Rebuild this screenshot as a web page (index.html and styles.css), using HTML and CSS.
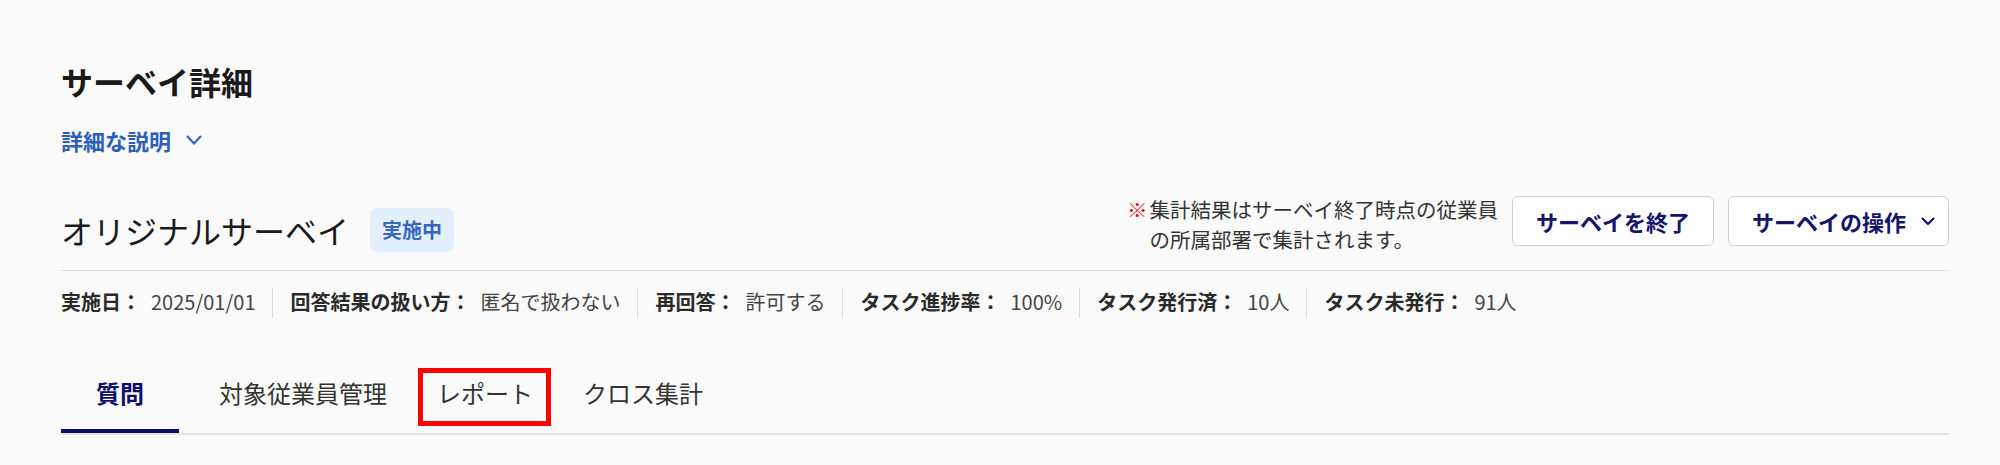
FILE: index.html
```html
<!DOCTYPE html>
<html lang="ja">
<head>
<meta charset="UTF-8">
<title>サーベイ詳細</title>
<link rel="stylesheet" href="styles.css">
</head>
<body>

<div class="page">
    <h1 class="page-title">サーベイ詳細</h1>

    <a class="detail-toggle" href="#">
        詳細な説明
        <svg width="18" height="12" viewBox="0 0 18 12"><path d="M2 2 L9 9.5 L16 2" fill="none" stroke="#2b5fb8" stroke-width="2"/></svg>
    </a>

    <!-- Survey header -->
    <div class="survey-header">
        <div class="survey-title">
            <span class="survey-name">オリジナルサーベイ</span>
            <span class="badge">実施中</span>
        </div>
        <div class="survey-actions">
            <p class="note"><span class="note-mark">※</span><span>集計結果はサーベイ終了時点の従業員<br>の所属部署で集計されます。</span></p>
            <button class="btn">サーベイを終了</button>
            <button class="btn btn-menu">サーベイの操作
                <svg width="16" height="10" viewBox="0 0 16 10"><path d="M2 2 L8 8 L14 2" fill="none" stroke="#14146b" stroke-width="2.2"/></svg>
            </button>
        </div>
    </div>

    <!-- Summary -->
    <ul class="stats">
        <li><b>実施日：</b><span>2025/01/01</span></li>
        <li><b>回答結果の扱い方：</b><span>匿名で扱わない</span></li>
        <li><b>再回答：</b><span>許可する</span></li>
        <li><b>タスク進捗率：</b><span>100%</span></li>
        <li><b>タスク発行済：</b><span>10人</span></li>
        <li><b>タスク未発行：</b><span>91人</span></li>
    </ul>

    <!-- Tabs -->
    <nav class="tabs">
        <a class="tab active" href="#">質問</a>
        <a class="tab" href="#">対象従業員管理</a>
        <a class="tab" href="#">レポート<span class="highlight"></span></a>
        <a class="tab" href="#">クロス集計</a>
    </nav>
</div>

</body>
</html>
```

FILE: styles.css
```css
/* Base */
html, body {
    margin: 0;
    padding: 0;
    background: #fafafa;
    color: #1a1a1a;
    font-family: "Noto Sans CJK JP", "Noto Sans", sans-serif;
}

.page {
    padding: 61px 51px 0 61px;
}

/* Title + description toggle */
.page-title {
    margin: 0;
    font-size: 32px;
    line-height: 40px;
    font-weight: 700;
}

.detail-toggle {
    display: inline-flex;
    align-items: center;
    gap: 14px;
    margin-top: 25px;
    font-size: 22px;
    line-height: 28px;
    font-weight: 700;
    color: #2b5fb8;
    text-decoration: none;
}

/* Survey header */
.survey-header {
    display: flex;
    justify-content: space-between;
    align-items: center;
    margin-top: 39px;
    padding-bottom: 16px;
    border-bottom: 1px solid #e0e0e0;
}

.survey-title {
    display: flex;
    align-items: center;
    gap: 21px;
    padding-top: 12px;
}

.survey-name {
    font-size: 32px;
    line-height: 44px;
    font-weight: 400;
}

.badge {
    display: inline-block;
    height: 44px;
    line-height: 44px;
    padding: 0 12px;
    border-radius: 7px;
    background: #e4effd;
    color: #3767bd;
    font-size: 20px;
    font-weight: 700;
}

.survey-actions {
    display: flex;
    align-items: center;
    gap: 14px;
}

.note {
    display: flex;
    margin: 0;
    font-size: 20.5px;
    line-height: 30px;
    color: #333;
}

.note-mark {
    color: #e8101a;
    margin-right: 2px;
}

.btn {
    display: inline-flex;
    align-items: center;
    height: 50px;
    padding: 0 23px;
    background: #fff;
    border: 1px solid #cfcfcf;
    border-radius: 6px;
    color: #14146b;
    font-family: inherit;
    font-size: 22px;
    font-weight: 700;
    margin-bottom: 6px;
}

.btn-menu {
    padding-right: 12px;
    gap: 14px;
}

/* Summary row */
.stats {
    display: flex;
    list-style: none;
    margin: 17px 0 0 0;
    padding: 0;
}

.stats li {
    padding: 0 17px;
    height: 30px;
    line-height: 28px;
    font-size: 20px;
    color: #444;
    border-left: 1px solid #dcdcdc;
}

.stats li:first-child {
    padding-left: 0;
    border-left: none;
}

.stats b {
    color: #2a2a2a;
    margin-right: 10px;
}

/* Tabs */
.tabs {
    display: flex;
    gap: 30px;
    margin-top: 55px;
    border-bottom: 2px solid #e3e3e3;
}

.tab {
    position: relative;
    padding: 0 10px 16px;
    font-size: 24px;
    line-height: 40px;
    color: #333;
    text-decoration: none;
    text-align: center;
    border-bottom: 4px solid transparent;
}

.tab.active {
    min-width: 98px;
    font-weight: 700;
    color: #0d0d6b;
    border-bottom-color: #0d0d6b;
}

/* red annotation box */
.highlight {
    position: absolute;
    top: -5px;
    left: -9px;
    right: -8px;
    bottom: 3px;
    border: 5px solid #ff0000;
}
```
